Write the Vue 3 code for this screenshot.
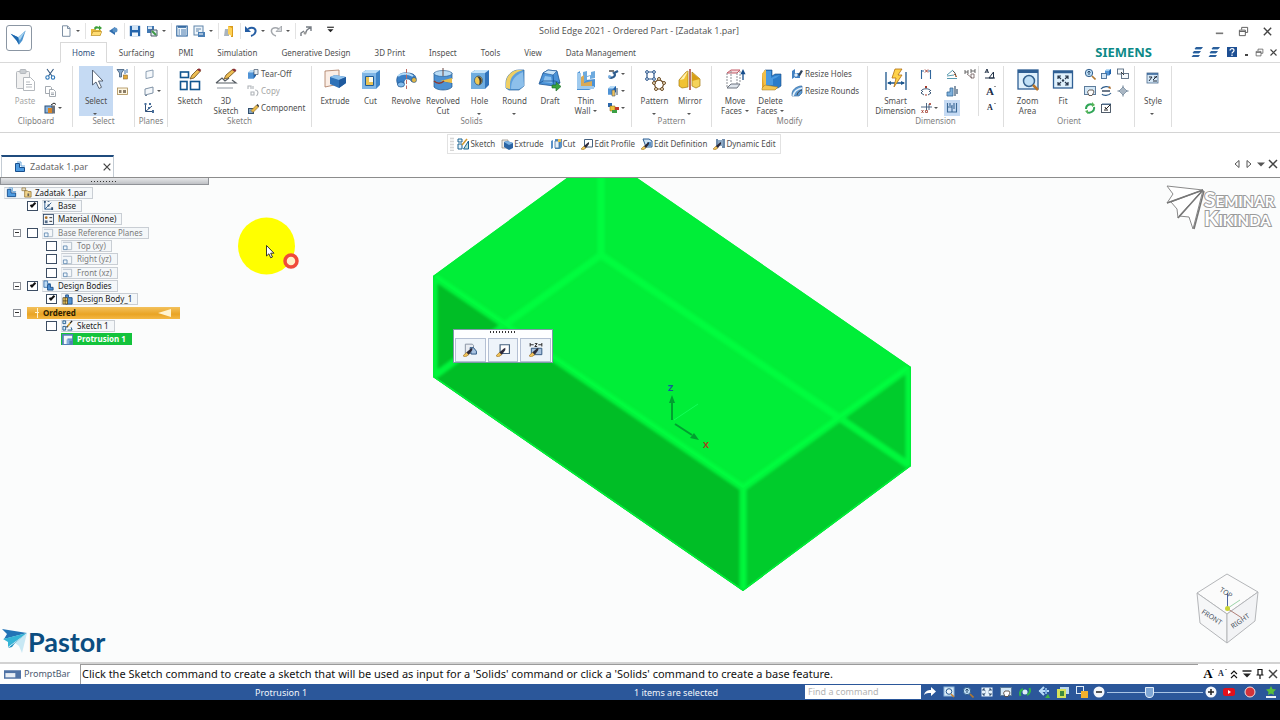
<script setup>
import { h, ref } from 'vue'

const pencil = '<path d="M4 8.500 9.500 3l2 2L6 10.500z" fill="#e9b949" stroke="#7a5a1c" stroke-width=".5"/><path d="M9.500 3 10.500 2l2 2-1 1z" fill="#333"/>'
const wand = '<path d="m0 11 3-3 2 2-3 2z" fill="#f0c258" stroke="#8a6420" stroke-width=".5"/><path d="m3 8 3.500-3L8 4v2L5 10z" fill="#2d2a3a"/>'
const box = (x, y, s) => `<g transform="translate(${x} ${y}) scale(${s})"><path d="M0 3 4 0h6v7L7 11H0z" fill="#4f93d6"/><path d="M0 3 3 0h7L7 3z" fill="#b9dcf6"/><path d="M7 3 10 0v7l-3 4z" fill="#1d5fa8"/></g>`

const big = {
  paste: '<g fill="#f1f1f1" stroke="#b4b8bd"><rect x="3.500" y="3.500" width="13" height="17" rx="1"/><rect x="7" y="1.500" width="6" height="4" rx="1" fill="#c9cdd1"/><path d="M10.500 9.500h7l4 4v9h-11z" fill="#fff"/><path d="M13 14h4M13 16.500h6M13 19h6"/></g>',
  select: '<path d="M8.500 2v15l3.500-3 3 6.500 2.500-1.200-3-6.300h4.500z" fill="#fff" stroke="#4a5668" stroke-width=".9"/>',
  sketch: '<g fill="none" stroke="#12568f" stroke-width="1.600"><rect x="2.500" y="4" width="8" height="5.500"/><rect x="2.500" y="13.500" width="6.500" height="8"/><rect x="12.500" y="13.500" width="9" height="8"/></g><path d="m12 11 2-4 6-6 2.500 2L16 10z" fill="#edbd52" stroke="#6b4a17" stroke-width=".8"/><path d="m19 2 2-1.800 2.300 1.800-1.500 1.500z" fill="#8c2d35"/>',
  sketch3d: '<g fill="none" stroke="#555c63" stroke-width="1.200"><path d="M2 15h20l-4-3M2 15l6-5 3 3 4-3"/><path d="M3 20h16" stroke="#b5bac0" stroke-width="1.500"/></g><path d="m10 11 2-4 7-6 2.500 2L14 10z" fill="#edbd52" stroke="#6b4a17" stroke-width=".8"/><path d="m18 2 2-1.500 2.500 1.500-1.500 2z" fill="#8c2d35"/>',
  extrude: '<path d="M2 3 16 2v14L2 19z" fill="#fbeee6" stroke="#a8765c" stroke-width=".8"/><path d="M7 9 12 7l11 2v6l-7 5-9-4z" fill="#2f72b8"/><path d="m7 9 5-2 11 2-7 3z" fill="#8fc1ec"/><path d="m16 12 7-3v6l-7 5z" fill="#1f5a9e"/>',
  cut: '<path d="M3 5 7 2h14v15l-4 4H3z" fill="#3f86c9"/><path d="M3 5h14v16H3z" fill="#7fb6e6"/><path d="M3 5 7 2h14l-4 3z" fill="#bfe0f8"/><path d="M6.500 8.500h8v9h-8z" fill="#fffbe8" stroke="#1b5a98"/><path d="M7 17V9h3v5h4v3z" fill="#e8c254"/>',
  revolve: '<path d="M4 17c-4-8 2-13 9-12 7 0 9 3 9 6l-4 3c-2-4-9-5-8 2z" fill="#3b80c6" stroke="#174f8c" stroke-width=".7"/><path d="M4 8c3-3 10-3 15 0" stroke="#b4dbf8" stroke-width="2" fill="none"/><ellipse cx="7" cy="16.500" rx="3.500" ry="2.500" fill="#86bceb" stroke="#174f8c" stroke-width=".7"/><circle cx="20" cy="12" r="2.500" fill="#e5b744" stroke="#174f8c" stroke-width=".6"/><path d="M12.500 1v20" stroke="#c0685f" stroke-dasharray="4 1.500"/>',
  revcut: '<path d="M3 5v14c3 4 15 4 18 0v-4l-9-2 9-2V5z" fill="#4d91d2" stroke="#1b568f" stroke-width=".7"/><path d="m9 13 12-3v5z" fill="#e9bf4b"/><ellipse cx="12" cy="5.500" rx="9" ry="3" fill="#b8dbf5" stroke="#1b568f" stroke-width=".6"/><path d="M3 13c3 3 7 3 10 0" fill="none" stroke="#8d3b30" stroke-width="1.500"/><path d="M12 0v8" stroke="#6b4640"/>',
  hole: '<path d="M3 5 7 2h14v15l-4 4H3z" fill="#3274bb"/><path d="M3 5h14v16H3z" fill="#70addf"/><path d="M3 5 7 2h14l-4 3z" fill="#c5e3f9"/><ellipse cx="10.500" cy="12.500" rx="4" ry="4.500" fill="#f0c852" stroke="#174b83" stroke-width=".7"/><path d="M9 8.500c6-1 6 7 2 8.500 1-3 1-6-2-8.500z" fill="#3e3930"/>',
  round: '<path d="M3 20V15C3 8 9 2 16 2h5v16l-5 4H6z" fill="#5d9fdb" stroke="#24609b" stroke-width=".7"/><path d="M3 20V15C3 8 9 2 16 2h4C12 4 7 9 7 16v5z" fill="#efcf64"/><path d="M8 21c0-8 3-13 12-17l1 14-5 3z" fill="#8dc0eb"/>',
  draft: '<path d="m5 5 5-3 9 1 3 12-6 3-15-2z" fill="#4b93d8" stroke="#1a5697" stroke-width=".8"/><path d="m5 5 5-3 9 1-4 4z" fill="#c8e4f9" stroke="#1a5697" stroke-width=".6"/><path d="m7 8 6 1 1 6-9-1z" fill="#8cc1ee"/><path d="m15 7 1 11M2 15l3-2h12l5 2" stroke="#1a5697" stroke-width=".8" fill="none"/><path d="M14 17h4v-3l5 4.500-5 4.500v-3h-4z" fill="#3aa43d" stroke="#1a6622" stroke-width=".6"/>',
  thin: '<path d="M3 5 6 3v13l6-4 9-1v8l-6 3H3z" fill="#4c92d5"/><path d="M3 5h4v13h13v3H3z" fill="#9fcaee"/><path d="M9 4v11l4-3V9l3-1v3l5-1V3l-4 1v3l-4 1V3z" fill="#6daade"/><path d="M7 18V9l3-2v8l8-2v5z" fill="#d9aa58"/>',
  pattern: '<path d="M4 4h7v7H4z" fill="none" stroke="#31598c" stroke-width="1.200"/><g fill="#dcebfa" stroke="#31598c"><circle cx="4" cy="4" r="1.400"/><circle cx="11" cy="4" r="1.400"/><circle cx="4" cy="11" r="1.400"/><circle cx="11" cy="11" r="1.400"/></g><path d="m16 11 5 4-2 6h-6l-2-6z" fill="none" stroke="#6b4c27" stroke-width="1.200"/><g fill="#f6e6c5" stroke="#6b4c27"><circle cx="16" cy="11" r="1.500"/><circle cx="21" cy="15" r="1.500"/><circle cx="19" cy="21" r="1.500"/><circle cx="13" cy="21" r="1.500"/><circle cx="11" cy="15" r="1.500"/></g>',
  mirror: '<path d="m1 12 7-8 2-1v16l-6 1-3-2z" fill="#f1c232" stroke="#a5790e" stroke-width=".7"/><path d="m2 12 4-1 4-8-4 4z" fill="#fff1b0"/><path d="m14 4 8 7v7l-4 2-4-2z" fill="#f5d35a" stroke="#a5790e" stroke-width=".7"/><path d="M14 5v8l8-2z" fill="#d79f17"/><path d="M12 1v21" stroke="#a23428" stroke-width="1.400"/>',
  movef: '<g fill="none"><path d="M4 5 8 2h9l-3 3z" fill="#f6d9dc" stroke="#c25a66"/><path d="M4 5v14M14 5v14M17 3v12M8 3v12" stroke="#8b8f95" stroke-dasharray="2 1"/><path d="m4 20 4-4h9l-3 4z" fill="#dfe5ec" stroke="#6e7580"/></g><path d="M20 12V3M18.500 5.500 20 2.500l1.500 3z" stroke="#164d8c" stroke-width="1.300" fill="#164d8c"/>',
  delf: '<path d="M3 6 6 2v16l13 1-3 3L3 20z" fill="#e6a426"/><path d="M6 2h7v6l3-2h6v12l-3 2H6z" fill="#2c7cc9" stroke="#174b83" stroke-width=".6"/><path d="M3 6 6 2h1v16H5z" fill="#f3c04a"/><path d="M7 3h5v7l4-2 5-1-4 3-3 1v6H7z" fill="#4b9ae0"/><path d="M3 20 6 17l13 2-3 3H3z" fill="#f5c651" stroke="#a3741c" stroke-width=".5"/>',
  smart: '<g stroke="#1c568d" stroke-width="1.300" fill="#1c568d"><path d="M2 4v18M22 4v18M4 15h16"/><path d="m3 15 4-2v4zM21 15l-4-2v4z" stroke="none"/></g><path d="m11 1-3 9h4l-2 9 8-12h-4l4-6z" fill="#ffd24a" stroke="#b06e13" stroke-width=".8"/>',
  zoomarea: '<rect x="2" y="2" width="20" height="19" fill="#dff0fc" stroke="#2f5f94" stroke-width="1.300"/><path d="M2 3.500h20" stroke="#2f5f94" stroke-width="3"/><circle cx="13" cy="13" r="5.500" fill="#bfdff6" stroke="#35628f" stroke-width="1.500"/><path d="m17 17 5 5" stroke="#b97428" stroke-width="2.500"/>',
  fit: '<rect x="2.500" y="3" width="19" height="17" fill="#dff0fc" stroke="#2f5f94" stroke-width="1.300"/><path d="M2 4h20" stroke="#2f5f94" stroke-width="2.500"/><g stroke="#27374c" stroke-width="1.200" fill="none"><path d="M7 11V8h3M7 8l3 3M17 11V8h-3M17 8l-3 3M7 14v3h3M7 17l3-3M17 14v3h-3M17 17l-3-3"/></g><circle cx="12" cy="12.500" r="1.200" fill="#27374c"/>',
  style: '<g transform="translate(5 4)"><rect x="1" y="1" width="11" height="10" fill="#d6e8f7" stroke="#4d6c8e" stroke-width=".8"/><path d="M1 2h11" stroke="#2f5f94" stroke-width="1.500"/><path d="M3 5h3L3 9M7 8l4-4M8 5h3M7 9h4" stroke="#222b38" fill="none"/></g>',
}

const small = {
  scissors: '<path d="m3 1 5 7M9.500 1l-5 7" stroke="#35587f" stroke-width="1.100"/><circle cx="3.500" cy="9.500" r="1.700" fill="none" stroke="#2a76b9" stroke-width="1.100"/><circle cx="9" cy="9.500" r="1.700" fill="none" stroke="#2a76b9" stroke-width="1.100"/>',
  copy: '<g fill="#fff" stroke="#9aa0a8" stroke-width=".9"><path d="M1.500 1.500h5l1 1v6h-6z"/><path d="M5.500 4.500h4l2 2v5h-6z"/><path d="M7 8h3M7 9.500h3"/></g>',
  format: '<rect x="1" y="4" width="7" height="7" fill="#8ab4dc" stroke="#264f7d"/><path d="M4 6h4v5H4z" fill="#d78528"/><path d="M8 3.500h3v8H8z" fill="#6c7179"/><path d="m7 3 3-2 2 1.500" stroke="#222" fill="none"/>',
  filter: '<path d="M1 1.500h7L5.500 5v4h-2V5z" fill="#88a9cc" stroke="#3e5a7a" stroke-width=".8"/><path d="M9 2v4M11 1v4" stroke="#3a6ea8"/><rect x="7.500" y="7" width="4" height="4" fill="#e3aa3b" stroke="#7c5618" stroke-width=".5"/>',
  overlap: '<rect x="1.500" y="3" width="10" height="6.500" fill="#fff7e2" stroke="#a88b53" stroke-width=".8"/><path d="M3 5h2.500v3H3zM7 5h3v3H7z" fill="#8b7d68"/>',
  plane: '<path d="M3 3.500 10 2v7l-7 1.500z" fill="#f5f8fb" stroke="#8296ab" stroke-width=".9"/>',
  plane2: '<path d="m2 4 8-2v6l-8 2z" fill="#f5f8fb" stroke="#73879c" stroke-width=".9"/><path d="M2 10.500h2" stroke="#73879c"/>',
  csys: '<g stroke="#2e4f78" fill="none"><path d="M2.500 2v7.500M2.500 9.500H10M2.500 9.500 9 4"/></g><g fill="#466d9a"><path d="M1.500 1h2v2h-2zM6 1h2v2H6zM9 8h2v3H9zM5 5h2v2H5z"/></g>',
  tear: box(1, 2, 0.8) + '<path d="M7 1.500h4v5H7z" fill="#e8eef4" stroke="#596a7d" stroke-width=".8"/>',
  scopy: '<g fill="none" stroke="#aeb2b7" stroke-width="1.100"><path d="M1 4V1h3v3M6 4V1M8 5c3 0 4 3 1.500 6M4 7h3v3H4z"/></g>',
  comp: '<rect x="1.500" y="6.500" width="5" height="5" fill="#87a5c2" stroke="#32506f"/>' + pencil,
  sweep: '<path d="M2 9c3 2 8-1 5-4l4-2" fill="none" stroke="#2f5d8e" stroke-width="2.300"/><path d="M2 3h5" stroke="#222" stroke-width="1.200"/><circle cx="2.500" cy="8.500" r="1.500" fill="#79b0e3"/>',
  lip: box(1, 1, 0.8) + '<path d="M5 5h3v6H5z" fill="#f0c25a" stroke="#4b5b6c" stroke-width=".6"/><path d="M9 3h2v7H9z" fill="#9aa5b0"/>',
  bool: '<path d="M1 1h4v4H1z" fill="#2c68ad"/><path d="M3 4h5v5H3z" fill="#efc23c" stroke="#7a5a10" stroke-width=".5"/><path d="M8 5h4v3H8z" fill="#c0392b"/><path d="M5 8h5v3H5z" fill="#3ca044"/>',
  rholes: '<path d="M1 3 4 1v8l-3 2zM4 5h5v5H4z" fill="#4281c2"/><path d="m7 7 3-5 2 1-3 5z" fill="#31445c"/><circle cx="5" cy="7" r="1.700" fill="#e3eef8"/>',
  rrounds: '<path d="M1 11V8c1-4 4-6 8-7h2v7l-3 3z" fill="#5e9bd3" stroke="#2a5f96" stroke-width=".6"/><path d="M2 11c1-5 4-7 9-8" stroke="#e6f2fb" stroke-width="1.500" fill="none"/><path d="M6 10c1-3 2-4 5-5" stroke="#3d444e" fill="none"/>',
  dist: '<path d="M1.500 2v9M10.500 2v9M2 3h2M8 3h2" stroke="#30669c" stroke-width="1.100"/><path d="m5 1.500 3 3M8 1.500l-3 3" stroke="#a23a2c"/>',
  angle: '<path d="M1 6c2-3 8-3 10 0M3 6 1 8l3 2M9 6l2 2-3 2" stroke="#3b5878" fill="none"/><path d="m5 1 2 2M7 1 5 3M5 10h2" stroke="#a23a2c" fill="none"/>',
  coord: '<path d="M1 5h11M6.500 1v7M9 2v6" stroke="#3b5878" stroke-width=".9"/><path d="m1.500 8 2 3M3.500 8l-2 3M5.500 8.500h2v2h-2zM9 1l2 2M11 1 9 3" stroke="#a23a2c" stroke-width=".8" fill="none"/>',
  angular: '<path d="m1 7 6-5M1 10.500h10M1 8l7-1" stroke="#5a9bb0"/><path d="M7 3c2 1 3 4 3 6" stroke="#444" fill="none"/><path d="m8 6 3 3" stroke="#c56a30"/>',
  sym: '<path d="M1 11V7h3V3h3v8z" fill="#7db0dc" stroke="#376997" stroke-width=".8"/><path d="M9 1v10M11 4v5" stroke="#38536f" stroke-width="1.200"/>',
  attach: '<path d="M1.500 1v9h9V1M6 3v7M1.500 5H6M4 1v3M8 1v6" stroke="#3a6895" fill="none" stroke-width="1.100"/>',
  styled: '<path d="M1 2v4M1 4h3M4 2v4M7 1v4M7 3h4M11 1v4" stroke="#555" stroke-width=".9"/><path d="m3 6 5 4M7 6h3v4H7z" stroke="#7a6a6a" stroke-width=".9" fill="none"/>',
  atext: '<path d="m1 5 2-4 1.500 4M2 4h2M5 10l4.500-6v6zM1 10h10" stroke="#1f2f45" fill="none"/>',
  zoom: '<circle cx="5" cy="5" r="3.700" fill="#bcdcf4" stroke="#35628f"/><path d="m8 8 3.500 3.500" stroke="#b27930" stroke-width="1.600"/><path d="M5 3v4M3.500 4.500 5 3l1.500 1.500" stroke="#2b4c6e" fill="none"/>',
  rotate: box(5, 1, 0.6) + '<rect x="1.500" y="5.500" width="5" height="5" fill="#d2e6f7" stroke="#436b95" stroke-width=".9"/>',
  views: '<g fill="#f5f9fc" stroke="#55697e" stroke-width=".9"><rect x=".5" y="1" width="6" height="5"/><rect x="4.500" y="5.500" width="7" height="5"/></g><path d="m4 4 3 3" stroke="#333"/>',
  pan: '<rect x=".5" y="1.500" width="11" height="8" fill="#d3e7f6" stroke="#5d7c9b"/><path d="M5 10.500 3.500 7 5 5h4l1 2-2 3.500z" fill="#fff" stroke="#4b3d33" stroke-width=".8"/>',
  spin: '<path d="M1 4c2-3 8-3 9-1M11 8c-2 3-8 3-9 1" stroke="#2f5d8b" stroke-width="1.200" fill="none"/><path d="M2 5h8v2H2z" fill="#6c7888"/><path d="m10 1 1 3-3-1z" fill="#b06a21"/>',
  shade: '<path d="m6 2 4 4-4 4-4-4z" fill="#a9b6c3" stroke="#7c8fa2" stroke-width=".8"/><path d="M6 .5v2M6 9.500v2M.5 6h2M9.500 6h2" stroke="#60788e"/>',
  refresh: '<path d="M2 7c0-4 4-6 7-4M10 5c1 4-4 7-7 5" stroke="#2fa556" stroke-width="2" fill="none"/><path d="m8 0 3 3-3 2zM4 12 1 9l3-1z" fill="#58b558"/>',
  editv: '<rect x="1.500" y="2.500" width="9" height="8" fill="#fff" stroke="#3f4d5c" stroke-width=".9"/><path d="m5 5 1 2 5-5M4 8h4" stroke="#222" fill="none"/><path d="M2 2h9" stroke="#4b7197"/>',
  file: '<path d="M2.500.8h5l2.500 2.500v8H2.500z" fill="#fdfefe" stroke="#7d8fa3"/><path d="M7.500 1v2.500H10" fill="none" stroke="#7d8fa3"/>',
  open: '<path d="M1 10.500V4h4l1 1h5v5.500z" fill="#e8b73a"/><path d="m1 10.500 2-4h9l-2 4z" fill="#ffdc73" stroke="#a57a1b" stroke-width=".5"/><path d="M4 3c1-2 3-2 5-1V.5L12 3 9 5.500V4C7 3 6 4 5 5z" fill="#3fa13c"/>',
  prev: '<path d="m2 6 6-4v8z" fill="#2f6cae"/><circle cx="8" cy="5" r="2.500" fill="#5a92c6"/>',
  save: '<path d="M.8.800h10.400v10.400H.8z" fill="#2465ac"/><path d="M3 1h6v4H3z" fill="#cfe3f5"/><path d="M3 7.500h6V11H3z" fill="#eef5fb"/>',
  saveall: '<path d="M1 1h7v7H1z" fill="#4279b3"/><path d="M2 1.500h4v2.500H2z" fill="#dceaf6"/><path d="M5 5h6v6H5z" fill="#e5edf4" stroke="#4c5a6a"/><path d="m6 6 4 4" stroke="#3d9a45" stroke-width="2"/>',
  list: '<rect x=".8" y="1" width="10.400" height="10" fill="#eff7fd" stroke="#1d5795"/><path d="M2 2h8" stroke="#1d5795" stroke-width="1.500"/><path d="M2.500 5h1.500M5 5h5M2.500 7h1.500M5 7h5M2.500 9h1.500M5 9h5" stroke="#1d5795" stroke-width=".8"/>',
  form: '<rect x="1" y="1" width="9" height="9" fill="#eef5fb" stroke="#6085aa"/><path d="M3 4h5M3 6h3" stroke="#6085aa"/><path d="M5 7h7v5H5z" fill="#4a7fb5"/><path d="M6 9h4" stroke="#fff"/>',
  door: '<path d="M2 4h4v7H1z" fill="#aab4be"/><path d="M5 1h5v11H8V5H5z" fill="#d99b1d"/><path d="m5 1 4 2v8l-4-2z" fill="#ffd052"/>',
  undo: '<path d="M3 4c5-3 9 0 7 4-.6 1.500-2 2.500-4 3" fill="none" stroke="#245da3" stroke-width="2"/><path d="M0 1v6h6z" fill="#245da3"/>',
  redo: '<path d="M9 4C4 1 0 4 2 8c.6 1.500 2 2.500 4 3" fill="none" stroke="#a3a7ac" stroke-width="1.500"/><path d="M11.500 1v5.500H6z" fill="#d5d8db" stroke="#9a9ea3" stroke-width=".8"/>',
  cmd: '<path d="M1 11V8l3-2M5 9l2-4 4-3M6 2h5v4" fill="none" stroke="#777d84" stroke-width="1.400"/><circle cx="5" cy="8" r="1.500" fill="#999"/>',
  b1: '<path d="M1 1h4v3H1zM1 6h4v5H1z" fill="#e5f2fa" stroke="#1a6390"/><path d="M6.500 11h5V3z" fill="#bfe0d8" stroke="#1a6390"/><path d="m5 7 5-6" stroke="#d29a31" stroke-width="1.500"/>',
  b2: '<path d="M1 2h6v8H1z" fill="#f3f0ea" stroke="#776c60" stroke-width=".6"/><path d="m3 4 3-1 6 2v5l-4 2-5-3z" fill="#2c65a4"/><path d="m3 4 3-1 6 2-4 2z" fill="#7db2e2"/>',
  b3: '<path d="M1 3l2-1v8l-2 1zM5 1h7v8l-2 2H5z" fill="#5992c8"/><path d="M5 3h4v7H5z" fill="#e3f0fa" stroke="#2b5f93" stroke-width=".7"/><path d="M8 1h3v3H8z" fill="#ebc053"/>',
  b4: '<path d="M3.500 1.500h8v7.500h-8z" fill="#fff" stroke="#44607e"/>' + wand,
  b5: '<path d="M2 1h6l3 2v6H5z" fill="#cfe2f4" stroke="#2d5e92"/><path d="M6 4h4v4H6z" fill="#5e93c8"/>' + wand,
  b6: '<path d="M3 1h2v8H3zM9 1h3v9H9z" fill="#6e8bab"/><path d="M5 2h5v6H5z" fill="#8ea9c4"/>' + wand,
  part: '<path d="M1.500 2.500h4v4h5v4h-9z" fill="#4e9be0" stroke="#184f8d"/><path d="M3 1h4v4h4" fill="none" stroke="#6ba8dc"/>',
  lock: '<path d="M1 1h4v3H1z" fill="#e9e2cc" stroke="#8a6a28" stroke-width=".7"/><path d="M4 4h3l1 1h3v6H4z" fill="#f1d58c" stroke="#8a6a28" stroke-width=".8"/><path d="M7 7h2v3H7z" fill="#69645a"/>',
  base: '<path d="M2 1v9h8M2 10l7-7" stroke="#2c5c8e" fill="none"/><g fill="#2c4d70"><path d="M1 1h2v2H1zM5 1h2v1H5zM9 8h2v3H9zM5 5h2v2H5z"/></g>',
  mat: '<rect x=".5" y=".5" width="11" height="11" fill="#f2f6fa" stroke="#2e4766" stroke-width=".9"/><path d="M7 4h3M7 8h3" stroke="#222"/><circle cx="3.500" cy="4" r="1.500" fill="#a96e25"/><path d="M2 7h3v3H2z" fill="#526a86"/>',
  refp: '<path d="M1 2.500h9.500v8H5.500" fill="none" stroke="#a9b6c4" stroke-width=".9"/><path d="M1.500 6.500h4v4h-4z" fill="#eef5fb" stroke="#5a84ae" stroke-width=".9"/>',
  bodies: '<path d="M1 1h4v3h3v4H1z" fill="#bedaf3" stroke="#3d74ae"/><path d="M5 5h3v3h3v3H5z" fill="#4f90d3" stroke="#1d4f88"/>',
  body: '<path d="M4 1h3v3h4v7H4z" fill="#5493d2" stroke="#1d4f88"/><path d="M1 4h5v7H1z" fill="#f3cc62" stroke="#473a1e" stroke-width=".8"/><path d="M3.500 4v7M1 7.500h5" stroke="#473a1e" stroke-width=".8"/>',
  sk: '<path d="M1 1h3v3H1zM1 7h3v4H1z" fill="#ddecf8" stroke="#1c5b8f"/><path d="M6 11h5l-1-3" fill="none" stroke="#1c5b8f"/><path d="m5 8 6-7" stroke="#1a1a1a" stroke-width="1.500"/><path d="m6 7 3-4" stroke="#e3af3b" stroke-width="1.500"/>',
  prot: '<path d="M0 0h12v12H0z" fill="#5380b5"/><path d="M2 11V2h9v3H6v6z" fill="#f3f7fb"/><path d="M5 6h6v1H8v4H5z" fill="#88afdb"/>',
  f1: '<path d="M2 1h6l1 1v7H2z" fill="#e8ecf2" stroke="#8490a0" stroke-width=".8"/><path d="M6 4h3l2.500 3v2.500H7z" fill="#a8c3e2" stroke="#26517f" stroke-width=".8"/>' + wand,
  f3: '<path d="M1 0v3M11 0v3M1 1.500h3M8 1.500h3M5 .5h2L5 3h2" stroke="#222" stroke-width=".8" fill="none"/><path d="M2 4.500h9V10H2z" fill="#a9c1de" stroke="#2f567f" stroke-width=".8"/>' + wand,
  share: '<path d="M0 9c1-4 4-5 7-5V1l5 4.500L7 10V7C4 7 2 7 0 9z" fill="#fff"/>',
  szoom: '<rect x="1" y="1" width="10" height="9" fill="#d8ebf8" stroke="#8fb7da"/><circle cx="6" cy="5.500" r="2.800" fill="#eef7fd" stroke="#285a8f"/><path d="m8 8 3 3" stroke="#c9832f" stroke-width="1.500"/>',
  sfit: '<rect x=".5" y="1.500" width="11" height="9" fill="#e6f2fb"/><path d="M2 3h2M2 3v2M2 3l2.500 2M10 3H8M10 3v2M10 3 7.500 5M2 9h2M2 9V7M2 9l2.500-2M10 9H8M10 9V7M10 9 7.500 7" stroke="#28456a" stroke-width=".9" fill="none"/>',
  srot: '<path d="M1.500 10C0 6 2 4 4 3M10.500 2C12 6 10 8 8 9" fill="none" stroke="#32b34a" stroke-width="2"/><circle cx="6" cy="6" r="2.500" fill="#dbeefa"/>',
  sarr: '<path d="M1 5h10M6 1 2 5l4 4" stroke="#b9dcf8" stroke-width="2" fill="none"/><path d="M8 2v6" stroke="#7fb0e0" stroke-width="2"/><path d="m7 12 3-4 2 4z" fill="#41b047"/>',
  sview: '<path d="M3 1h9v7H3z" fill="#bcd8ef"/><path d="M0 3h9v9H0z" fill="#d6e25a"/><path d="M3 5h4v5H3z" fill="#3e8a3d"/>',
  swin: '<rect x=".5" y=".5" width="7" height="7" fill="#2b579a" stroke="#e2edf8"/><rect x="5" y="5" width="7" height="7" fill="#f3b12d"/>',
  tube: '<rect x="0" y="2" width="12" height="8" rx="2.500" fill="#e3101b"/><path d="m5 4 3 2-3 2z" fill="#fff"/>',
  rec: '<circle cx="6" cy="6" r="5" fill="#d3333a" stroke="#f3dede"/>',
  star: '<path d="m6 0 1.500 3 3.500.5L8.500 6l.5 3-3-1.500L3 9l.5-3L1 3.500 4.500 3z" fill="#58bd3c"/><path d="M1 10h10v2H1z" fill="#eef2f7"/>',
  strip: '<path d="M5 1h7l-1.500 2h-7zM3 5h7L8.500 7h-7zM2 9h7l-1.500 2h-7z" fill="#2b5f9b"/><path d="M4 3.500h6M2 7.500h6" stroke="#9cc1e2"/>',
  help: '<rect x="1" y="1" width="10" height="10" fill="#1d4f93"/><path d="M4 4.500C4 2 8 2 8 4.500 8 6 6 6 6 7.500M6 8.500V10" stroke="#fff" stroke-width="1.200" fill="none"/>',
  min: '<path d="M2 8h8" stroke="#777" stroke-width="1.800"/>',
  restore: '<path d="M4 4V1.500h6.500V7H8M1.500 4.500H8v6H1.500zM1.500 6H8" stroke="#555" fill="none"/>',
  close: '<path d="m2 2 8 8M10 2l-8 8" stroke="#444" stroke-width="1.500"/>',
  left: '<path d="m8 2.500-4 3.500 4 3.500z" fill="none" stroke="#555"/>',
  right: '<path d="m4 2.500 4 3.500-4 3.500z" fill="none" stroke="#555"/>',
  down: '<path d="M2 4.500h8L6 8.500z" fill="#555"/>',
  up2: '<path d="m3 6 3-3 3 3M3 10l3-3 3 3" stroke="#111" stroke-width="1.100" fill="none"/>',
  down2: '<path d="M1.500 3h9" stroke="#222" stroke-width="1.500"/><path d="M2 5.500h8L6 9.500z" fill="#222"/>',
  pin: '<path d="M4 1.500h4V7H4zM2.500 7h7M6 7v4" stroke="#111" fill="none" stroke-width="1.200"/>',
  keys: '<rect x="0" y="3" width="12" height="6" fill="#4f72a5"/><path d="M1 5h7v3H1z" fill="#e8eef6"/>',
}

const Icon = (p) =>
  h('svg', {
    class: big[p.n] ? 'icon icon-lg' : 'icon',
    viewBox: big[p.n] ? '0 0 24 24' : '0 0 12 12',
    innerHTML: big[p.n] || small[p.n],
    'aria-hidden': 'true',
  })
Icon.props = ['n']

const quick = [
  [{ n: 'file', dd: 1 }],
  [{ n: 'open' }, { n: 'prev' }],
  [{ n: 'save' }, { n: 'saveall', dd: 1 }],
  [{ n: 'list' }, { n: 'form', dd: 1 }],
  [{ n: 'door' }],
  [{ n: 'undo', dd: 1 }, { n: 'redo', dd: 1 }],
  [{ n: 'cmd' }],
]

const tabs = ['Home', 'Surfacing', 'PMI', 'Simulation', 'Generative Design', '3D Print', 'Inspect', 'Tools', 'View', 'Data Management']

const b = (n, lines, o = {}) => ({ n, lines, ...o })
const s = (...items) => ({ items })
const groups = [
  { name: 'Clipboard', cls: 'g-clip', cols: [b('paste', ['Paste'], { off: 1 }), s({ n: 'scissors' }, { n: 'copy' }, { n: 'format', dd: 1 })] },
  { name: 'Select', cls: 'g-select', cols: [b('select', ['Select'], { dd: 1, on: 1 }), s({ n: 'filter' }, { n: 'overlap' })] },
  { name: 'Planes', cls: 'g-planes', cols: [s({ n: 'plane' }, { n: 'plane2', dd: 1 }, { n: 'csys' })] },
  { name: 'Sketch', cls: 'g-sketch', cols: [b('sketch', ['Sketch']), b('sketch3d', ['3D', 'Sketch']), s({ n: 'tear', t: 'Tear-Off' }, { n: 'scopy', t: 'Copy', off: 1 }, { n: 'comp', t: 'Component' })] },
  {
    name: 'Solids', cls: 'g-solids', cols: [
      b('extrude', ['Extrude']), b('cut', ['Cut']), b('revolve', ['Revolve']), b('revcut', ['Revolved', 'Cut']),
      b('hole', ['Hole'], { dd: 1 }), b('round', ['Round'], { dd: 1 }), b('draft', ['Draft']), b('thin', ['Thin', 'Wall'], { dd: 1 }),
      s({ n: 'sweep', dd: 1 }, { n: 'lip', dd: 1 }, { n: 'bool', dd: 1 }),
    ],
  },
  { name: 'Pattern', cls: 'g-pattern', cols: [b('pattern', ['Pattern'], { dd: 1 }), b('mirror', ['Mirror'], { dd: 1 })] },
  { name: 'Modify', cls: 'g-modify', cols: [b('movef', ['Move', 'Faces'], { dd: 1 }), b('delf', ['Delete', 'Faces'], { dd: 1 }), s({ n: 'rholes', t: 'Resize Holes' }, { n: 'rrounds', t: 'Resize Rounds' })] },
  {
    name: 'Dimension', cls: 'g-dim', cols: [
      b('smart', ['Smart', 'Dimension']), s({ n: 'dist' }, { n: 'angle' }, { n: 'coord', dd: 1 }),
      s({ n: 'angular' }, { n: 'sym' }, { n: 'attach', on: 1 }), s({ n: 'styled' }),
      { ...s({ n: 'atext' }, { a: 'lg' }, { a: 'sm' }), bar: 1 },
    ],
  },
  {
    name: 'Orient', cls: 'g-orient', cols: [
      b('zoomarea', ['Zoom', 'Area']), b('fit', ['Fit']), s({ n: 'zoom' }, { n: 'pan' }, { n: 'refresh' }),
      s({ n: 'rotate' }, { n: 'spin' }, { n: 'editv' }), s({ n: 'views' }, { n: 'shade' }),
    ],
  },
  { name: '', cls: 'g-style', cols: [b('style', ['Style'], { dd: 1 })] },
]

const commands = [
  ['b1', 'Sketch'], ['b2', 'Extrude'], ['b3', 'Cut'], ['b4', 'Edit Profile'], ['b5', 'Edit Definition'], ['b6', 'Dynamic Edit'],
]

const tree = ref([
  { t: 'Base', n: 'base', lv: 1, ck: true },
  { t: 'Material (None)', n: 'mat', lv: 1 },
  { t: 'Base Reference Planes', n: 'refp', lv: 1, ck: false, ex: 1, dim: 1 },
  { t: 'Top (xy)', n: 'refp', lv: 2, ck: false, dim: 1 },
  { t: 'Right (yz)', n: 'refp', lv: 2, ck: false, dim: 1 },
  { t: 'Front (xz)', n: 'refp', lv: 2, ck: false, dim: 1 },
  { t: 'Design Bodies', n: 'bodies', lv: 1, ck: true, ex: 1 },
  { t: 'Design Body_1', n: 'body', lv: 2, ck: true },
  { t: 'Ordered', lv: 1, ex: 1, bar: 1 },
  { t: 'Sketch 1', n: 'sk', lv: 2, ck: false },
  { t: 'Protrusion 1', n: 'prot', lv: 2, hot: 1 },
])

const edges = 'M433 276 743 488 910 367M743 488V590M601 255V140M601 255 433 377M601 255 910 466M434 276V377M909 367V466'
const outline = 'M433 276 601 153 911 367V466L743 591 433 377Z'
const statusIcons = ['share', 'szoom', 'zoom', 'sfit', 'pan', 'srot', 'sarr', 'sview', 'swin']
const query = ref('')
const zoomLevel = ref(44)
</script>

<template>
  <div class="screen">
    <header class="titlebar">
      <button class="app-btn" aria-label="Application menu">
        <svg viewBox="0 0 24 24"><path d="m2 7 9 4 9-8-4 12-4 5-3-5z" fill="#4b93cf" /><path d="m2 7 9 4 1 9-3-5z" fill="#1e68ae" /><path d="m11 11 9-8-7 12z" fill="#a9d3ef" /></svg>
      </button>
      <div class="head">
        <div class="head-row">
          <div class="quick">
            <div v-for="(g, i) in quick" :key="i" class="quick-group">
              <button v-for="q in g" :key="q.n" :aria-label="q.n"><Icon :n="q.n" /><i v-if="q.dd" class="dd"></i></button>
            </div>
            <button class="custom" aria-label="Customize"><Icon n="down2" /></button>
          </div>
          <div class="title">Solid Edge 2021 - Ordered Part - [Zadatak 1.par]</div>
          <div class="win">
            <button aria-label="Minimize"><Icon n="min" /></button>
            <button aria-label="Restore"><Icon n="restore" /></button>
            <button aria-label="Close"><Icon n="close" /></button>
          </div>
        </div>
        <div class="head-row tabs-row">
          <nav class="tabs">
            <button v-for="(t, i) in tabs" :key="t" :class="{ active: i === 0 }">{{ t }}</button>
          </nav>
          <div class="brand">SIEMENS</div>
          <div class="mini">
            <button aria-label="Tile"><Icon n="strip" /></button>
            <button aria-label="Cascade"><Icon n="strip" /></button>
            <button aria-label="Help"><Icon n="help" /></button>
            <button aria-label="Minimize document" class="narrow"><span class="dot"></span></button>
            <button aria-label="Restore document" class="tiny"><Icon n="restore" /></button>
            <button aria-label="Close document" class="tiny"><Icon n="close" /></button>
          </div>
        </div>
      </div>
    </header>

    <section class="ribbon">
      <div v-for="g in groups" :key="g.cls" class="group">
        <div class="group-body" :class="g.cls">
          <template v-for="(c, i) in g.cols" :key="i">
            <button v-if="c.lines" class="big" :class="{ on: c.on, off: c.off }">
              <Icon :n="c.n" />
              <span class="cap">
                <span v-for="(l, k) in c.lines" :key="l">{{ l }}<i v-if="c.dd && k === 1" class="dd side"></i></span>
              </span>
              <i v-if="c.dd && c.lines.length === 1" class="dd under"></i>
            </button>
            <div v-else class="stack" :class="{ bar: c.bar }">
              <button v-for="(m, k) in c.items" :key="k" :class="{ on: m.on, off: m.off }" :aria-label="m.t || m.n || 'Text size'">
                <span v-if="m.a" class="letter" :class="m.a">A</span>
                <Icon v-else :n="m.n" />
                <span v-if="m.t">{{ m.t }}</span>
                <i v-if="m.dd" class="dd"></i>
              </button>
            </div>
          </template>
        </div>
        <div class="group-name">{{ g.name }}</div>
      </div>
    </section>

    <section class="command-row">
      <div class="commands">
        <span class="grip"></span>
        <button v-for="c in commands" :key="c[1]"><Icon :n="c[0]" />{{ c[1] }}</button>
      </div>
    </section>

    <section class="docs">
      <div class="doc-tab"><Icon n="part" /><span>Zadatak 1.par</span><button aria-label="Close tab"><Icon n="close" /></button></div>
      <div class="doc-nav">
        <button aria-label="Previous tab"><Icon n="left" /></button>
        <button aria-label="Next tab"><Icon n="right" /></button>
        <button aria-label="Tab list"><Icon n="down" /></button>
        <button aria-label="Close"><Icon n="close" /></button>
      </div>
    </section>

    <main class="canvas">
      <svg class="model" viewBox="0 178 1280 484" preserveAspectRatio="xMidYMin meet">
        <defs>
          <clipPath id="solid"><path :d="outline" /></clipPath>
          <filter id="soft" x="-5%" y="-5%" width="110%" height="110%"><feGaussianBlur stdDeviation="1.500" /></filter>
        </defs>
        <path :d="outline" fill="#00ee38" />
        <path d="M433 276 743 488V591L433 377Z" fill="#00be26" />
        <path d="M743 488 911 367V466L743 591Z" fill="#00cc2c" />
        <g clip-path="url(#solid)" fill="none" stroke="#00ff40">
          <path :d="edges" stroke-width="7" filter="url(#soft)" opacity=".85" />
          <path :d="outline" stroke="#00ee38" stroke-width="3" />
        </g>
        <g stroke="#00a030" fill="#00a030" stroke-width="2">
          <path d="M672 420V402" /><path d="m669 403 3-8 3 8z" stroke="none" />
          <path d="m675 424 17 11" /><path d="m699 440-9-2 4-5z" stroke="none" />
          <path d="m674 420 24-16" stroke="#10ff58" stroke-width="1" />
        </g>
        <text x="668" y="391" class="axis" fill="#175a9a">Z</text>
        <text x="703" y="448" class="axis" fill="#a8431c">X</text>
        <circle cx="266.500" cy="246" r="28.500" fill="#ffff00" />
        <circle cx="291" cy="261" r="6" fill="#fff0c8" stroke="#f04a3a" stroke-width="3.500" />
        <path d="M266.500 245.500v10.500l2.400-2.200 1.800 4 1.800-.8-1.800-3.800h3.300z" fill="#fff" stroke="#222" stroke-width=".9" />
      </svg>

      <aside class="panel">
        <div class="handle"><span></span></div>
        <div class="tree">
          <div class="node root"><span class="chip"><Icon n="part" /><Icon n="lock" />Zadatak 1.par</span></div>
          <div v-for="r in tree" :key="r.t" class="node" :class="['lv' + r.lv, { dim: r.dim }]">
            <button v-if="r.ex" class="expander" aria-label="Collapse"></button>
            <span v-if="r.bar" class="ordered"><i class="tick"></i>{{ r.t }}<i class="back"></i></span>
            <label v-else>
              <input v-if="r.ck !== undefined" v-model="r.ck" type="checkbox" />
              <span v-else class="nocheck"></span>
              <span class="chip" :class="{ hot: r.hot }"><Icon :n="r.n" />{{ r.t }}</span>
            </label>
          </div>
        </div>
      </aside>

      <div class="floatbar">
        <span class="dots"></span>
        <div>
          <button aria-label="Edit Definition"><Icon n="f1" /></button>
          <button aria-label="Edit Profile"><Icon n="b4" /></button>
          <button aria-label="Dynamic Edit"><Icon n="f3" /></button>
        </div>
      </div>

      <svg class="seminar" viewBox="0 0 112 48">
        <g fill="#fff" stroke="#8a8a8a" stroke-width="1" stroke-linejoin="round">
          <path d="M2 3 38 7 2 20l6-9z" /><path d="M38 7 13 35l-1-9-6-7z" /><path d="m38 7-10 39-4-12-10-1z" />
        </g>
        <g fill="none" stroke="#777" stroke-width="1.500"><path d="M38 7 2 20M38 7 13 35M39 8 29 46" /></g>
        <g class="sem-text"><text x="39" y="24"><tspan class="cap1">S</tspan>EMINAR</text><text x="39" y="43"><tspan class="cap1">K</tspan>IKINDA</text></g>
      </svg>

      <div class="pastor">
        <svg viewBox="0 0 28 28"><path d="M2 1 27 5 4 11l3-5z" fill="#2273b6" /><path d="M27 5 8 19v-5l-5-3z" fill="#35b4d6" /><path d="M27 5 22 25l-3-7-4-3z" fill="#c8e8f4" /><path d="M27 5 8 20l4-1 3-4z" fill="#1b90c0" /></svg>
        <span>Pastor</span>
      </div>

      <svg class="cube" viewBox="0 0 64 74">
        <g stroke="#b4b6b9" fill="#fbfbfb" stroke-linejoin="round">
          <path d="M32 2 63 20 32 42 2 21z" /><path d="m2 21 30 21v29L5 51z" fill="#f6f7f8" /><path d="M63 20 32 42v29l28-22z" fill="#f2f3f5" />
        </g>
        <g class="cube-text">
          <text transform="translate(24 19) rotate(33)">TOP</text>
          <text transform="translate(6 41) rotate(33)">FRONT</text>
          <text transform="translate(38 57) rotate(-35)">RIGHT</text>
        </g>
        <path d="M32.500 36V21" stroke="#4b62a0" /><path d="m33 36 12-8" stroke="#9bd3a8" /><path d="m33 37 14 9" stroke="#b08078" />
        <circle cx="32.500" cy="36.500" r="2.500" fill="#c9d336" />
      </svg>
    </main>

    <section class="prompt">
      <div class="prompt-name"><Icon n="keys" />PromptBar</div>
      <div class="prompt-text">Click the Sketch command to create a sketch that will be used as input for a 'Solids' command or click a 'Solids' command to create a base feature.</div>
      <div class="prompt-tools">
        <button aria-label="Larger text"><span class="letter xl">A</span></button>
        <button aria-label="Smaller text"><span class="letter sm">A</span></button>
        <button aria-label="Expand"><Icon n="up2" /></button>
        <button aria-label="Options"><Icon n="down2" /></button>
        <button aria-label="Pin"><Icon n="pin" /></button>
        <button aria-label="Close prompt"><Icon n="close" /></button>
      </div>
    </section>

    <footer class="status">
      <span class="st-a">Protrusion 1</span>
      <span class="st-b">1 items are selected</span>
      <input v-model="query" type="text" placeholder="Find a command" aria-label="Find a command" />
      <div class="st-icons"><button v-for="n in statusIcons" :key="n" :aria-label="n"><Icon :n="n" /></button></div>
      <button class="knob" aria-label="Zoom out"><svg viewBox="0 0 12 12"><circle cx="6" cy="6" r="5.500" fill="#f4f7fb" /><path d="M3 6h6" stroke="#222" stroke-width="1.500" /></svg></button>
      <input v-model="zoomLevel" class="slider" type="range" aria-label="Zoom" />
      <button class="knob" aria-label="Zoom in"><svg viewBox="0 0 12 12"><circle cx="6" cy="6" r="5.500" fill="#f4f7fb" /><path d="M3 6h6M6 3v6" stroke="#222" stroke-width="1.500" /></svg></button>
      <div class="st-end">
        <button aria-label="YouTube"><Icon n="tube" /></button>
        <button aria-label="Record"><Icon n="rec" /></button>
        <button aria-label="Upload"><Icon n="star" /></button>
      </div>
    </footer>
  </div>
</template>

<style>
html, body { margin: 0; background: #000; }
</style>

<style scoped>
.screen {
  box-sizing: border-box;
  min-height: 100vh;
  padding: 20px 0;
  display: flex;
  flex-direction: column;
  background: #000;
  color: #4f4f4f;
  font: 8px/10px "Noto Sans", "Open Sans", sans-serif;
  overflow: hidden;
}
button { font: inherit; color: inherit; background: none; border: 0; padding: 0; margin: 0; display: flex; align-items: center; justify-content: center; }
.icon { width: 12px; height: 12px; flex: none; display: block; }
.icon-lg { width: 24px; height: 24px; }
.dd { width: 0; height: 0; border: 2px solid transparent; border-top-color: #555; border-bottom: 0; flex: none; }

.titlebar { display: flex; background: #fff; height: 43px; border-bottom: 1px solid #d9d9d9; box-sizing: border-box; }
.app-btn { width: 26px; height: 26px; margin: 5px 28px 0 6px; border: 1px solid #8b96a3; border-radius: 3px; flex: none; box-sizing: border-box; }
.app-btn svg { width: 20px; height: 20px; }
.head { flex: 1; min-width: 0; display: flex; flex-direction: column; }
.head-row { height: 22px; display: flex; align-items: center; position: relative; }
.quick { display: flex; align-items: center; margin-left: -4px; }
.quick-group { display: flex; align-items: center; gap: 5px; padding: 0 5px 0 4px; border-right: 1px solid #e3e3e3; height: 16px; }
.quick-group:nth-child(7) { border-right: 0; }
.quick-group button { gap: 4px; }
.custom { margin: 0 0 4px 9px; }
.custom .icon { width: 9px; height: 9px; }
.title { position: absolute; left: 0; right: 62px; text-align: center; pointer-events: none; font: 9px/12px "Open Sans", "Noto Sans", sans-serif; }
.win { margin-left: auto; display: flex; gap: 13px; padding-right: 7px; }
.win .icon { width: 11px; height: 11px; }
.tabs-row { height: 20px; }
.tabs { display: flex; align-self: stretch; }
.tabs button { padding: 2px 12px 0; line-height: 18px; }
.tabs .active { border: 1px solid #d9d9d9; border-bottom-color: #fff; height: 21px; box-sizing: border-box; padding: 1px 11px 0; color: #2d4f7c; background: #fff; }
.brand { margin-left: auto; color: #0d8a88; font-weight: 700; font-size: 13px; line-height: 16px; }
.mini { display: flex; align-items: center; width: 87px; margin: 0 2px 0 39px; justify-content: space-between; }
.mini .tiny .icon { width: 9px; height: 9px; }
.mini .narrow { width: 6px; }
.dot { width: 3px; height: 2px; background: #444; margin-top: 6px; }

.ribbon { background: #fff; display: flex; padding: 3px 0 5px; height: 70px; box-sizing: border-box; border-bottom: 1px solid #d4d4d4; }
.group { display: flex; flex-direction: column; border-right: 1px solid #dedede; }
.group-body { display: grid; height: 50px; }
.group-name { text-align: center; color: #808080; line-height: 10px; }
.g-clip { grid-template-columns: 32px 31px; padding-left: 9px; }
.g-select { grid-template-columns: 34px 18px; padding: 0 3px 0 6px; }
.g-planes { grid-template-columns: 27px; padding-left: 5px; }
.g-sketch { grid-template-columns: 36px 36px 67px; padding-left: 4px; }
.g-solids { grid-template-columns: 36px 35px 36px 38px 35px 35px 36px 36px 27px; padding-left: 5px; }
.g-pattern { grid-template-columns: 35px 36px; padding: 0 3px 0 5px; }
.g-modify { grid-template-columns: 36px 35px 79px; padding-left: 5px; }
.g-dim { grid-template-columns: 43px 26px 18px 17px 20px; padding: 0 5px 0 6px; }
.g-orient { grid-template-columns: 35px 36px 16px 17px 16px; padding: 0 4px 0 6px; }
.g-style { grid-template-columns: 36px; }
.big { flex-direction: column; justify-content: flex-start; padding-top: 2px; position: relative; white-space: nowrap; }
.cap { display: flex; flex-direction: column; align-items: center; margin-top: 4px; }
.cap > span { display: flex; align-items: center; }
.side { margin-left: 3px; }
.under { position: absolute; bottom: 1px; left: 50%; margin-left: -3px; }
.on { background: #c5daf3; }
.off { color: #a5a5a5; }
.stack { display: grid; grid-template-rows: repeat(3, 1fr); justify-items: start; align-items: center; padding-left: 3px; white-space: nowrap; }
.stack button { gap: 2px; }
.stack .on { padding: 2px; margin-left: -2px; }
.stack.bar { border-left: 1px solid #dedede; padding-left: 5px; }
.letter { position: relative; font: 700 10px/12px "Liberation Serif", serif; color: #1a2c47; width: 12px; text-align: center; }
.letter::after { content: ""; position: absolute; right: 0; top: 1px; border: 1px solid transparent; border-bottom-color: #333; border-top: 0; }
.letter.lg { font-size: 11px; }
.letter.sm { font-size: 8px; }
.letter.xl { font-size: 13px; color: #000; }

.command-row { background: #fff; height: 22px; display: flex; justify-content: center; padding: 1px 0 0; box-sizing: border-box; }
.commands { display: flex; align-items: center; gap: 6px; border: 1px solid #e2e2e2; box-sizing: border-box; height: 20px; padding: 0 4px 0 2px; margin-right: 52px; }
.commands button { gap: 1px; }
.commands button:first-of-type { margin-left: -3px; }
.grip { width: 4px; height: 14px; opacity: 0.6; background: radial-gradient(#bbb 0.5px, transparent 1px) 0 0 / 2px 3px; }

.docs { background: #fff; height: 23px; display: flex; justify-content: space-between; border-bottom: 1px solid #8c8c8c; box-sizing: border-box; padding-left: 1px; }
.doc-tab { display: flex; align-items: center; width: 113px; box-sizing: border-box; border: 1px solid #c4ccd4; border-top: 2px solid #1f4b7d; border-bottom: 0; padding: 0 1px 0 12px; font-size: 9px; color: #666; }
.doc-tab span { flex: 1; margin-left: 4px; }
.doc-tab button .icon { width: 10px; height: 10px; }
.doc-nav { display: flex; align-items: center; padding: 0 1px 4px 0; }

.canvas { flex: 1; position: relative; background: #fbfcfc; overflow: hidden; min-height: 300px; }
.model { position: absolute; inset: 0; width: 100%; height: 100%; }
.axis { font: 9px "Noto Sans", sans-serif; font-weight: 700; }
.panel { position: relative; width: 209px; }
.handle { height: 7px; border: 1px solid #909398; border-top: 0; background: linear-gradient(#e6e7e9, #bfc1c5); box-sizing: border-box; display: flex; align-items: center; justify-content: center; }
.handle span { width: 27px; height: 1px; background: repeating-linear-gradient(90deg, #333 0 1px, transparent 1px 3px); }
.tree { display: grid; grid-template-rows: repeat(12, 1fr); height: 160px; margin-top: 1px; color: #222; white-space: nowrap; }
.node { display: flex; align-items: center; position: relative; }
.root { padding-left: 4px; }
.lv1 { padding-left: 27px; }
.lv2 { padding-left: 46px; }
.node label { display: flex; align-items: center; }
.chip { display: flex; align-items: center; gap: 4px; height: 12px; padding: 0 5px 0 0; border: 1px solid #c9ced4; border-left-color: #e2e6ea; background: #f4f7f9; box-sizing: border-box; }
.root .chip { gap: 3px; }
.root .chip .icon { margin-left: 1px; }
.dim .chip { color: #7c7c7c; }
.chip .icon { width: 11px; height: 11px; }
.chip.hot { background: #13c33c; border-color: #13c33c; color: #fff; font-weight: 700; }
.node input { appearance: none; width: 11px; height: 10px; margin: 0 4px 0 0; border: 1px solid #3c4d63; background: #fff; box-sizing: border-box; display: grid; place-items: center; }
.node input:checked::after { content: ""; width: 4px; height: 1px; border: solid #111; border-width: 0 0 2px 2px; transform: rotate(-45deg); margin-top: -3px; }
.nocheck { width: 15px; }
.expander { position: absolute; left: 13px; top: 3px; width: 8px; height: 8px; border: 1px solid #8b8f96; background: linear-gradient(#333, #333) center / 4px 1px no-repeat #fff; }
.ordered { display: flex; align-items: center; width: 153px; height: 12px; background: linear-gradient(#f3c15c, #e9a424 60%, #f4b844); color: #2b1c00; font-weight: 700; box-sizing: border-box; padding: 0 9px 0 8px; }
.tick { width: 4px; height: 10px; margin-right: 4px; background: linear-gradient(#fff3cf, #fff3cf) center / 1px 10px no-repeat, linear-gradient(#fff3cf, #fff3cf) center / 4px 1px no-repeat; }
.back { margin-left: auto; width: 0; border: 4px solid transparent; border-right: 13px solid #fff3cf; border-left: 0; }

.floatbar { position: absolute; left: 453px; top: 151px; width: 100px; height: 34px; box-sizing: border-box; border: 1px solid #7f98a8; background: #fdfeff; padding: 1px 1px 0; display: flex; flex-direction: column; align-items: center; gap: 5px; }
.floatbar .dots { width: 26px; height: 2px; background: repeating-linear-gradient(90deg, #333 0 1px, transparent 1px 3px); }
.floatbar div { display: flex; gap: 2px; align-self: stretch; flex: 1; }
.floatbar button { flex: 1; border: 1px solid #b4c0d4; background: #eef4fa; }
.floatbar .icon { width: 14px; height: 14px; }

.seminar { position: absolute; right: 3px; top: 5px; width: 112px; height: 48px; }
.sem-text { font: 700 15px Lato, sans-serif; fill: #fff; stroke: #9a9a9a; stroke-width: 2px; paint-order: stroke; }
.cap1 { font-size: 21px; }
.pastor { position: absolute; left: 0; bottom: 0; display: flex; align-items: center; color: #0b4d80; font: 700 27px/40px Lato, sans-serif; }
.pastor svg { width: 28px; height: 28px; }
.cube { position: absolute; right: 21px; bottom: 16px; width: 64px; height: 74px; }
.cube-text { font: 7px "Noto Sans", sans-serif; fill: #4b5563; }

.prompt { display: flex; height: 22px; box-sizing: border-box; background: #fff; border-top: 2px solid #d2d2d2; }
.prompt-name { width: 80px; box-sizing: border-box; display: flex; align-items: center; padding-left: 4px; gap: 3px; font-size: 9px; color: #4c5a70; }
.prompt-name .icon { width: 17px; height: 17px; }
.prompt-text { flex: 1; min-width: 0; border: solid #9b9b9b; border-width: 1px 0 0 1px; padding-left: 1px; color: #111; font-size: 11px; line-height: 17px; white-space: nowrap; overflow: hidden; }
.prompt-tools { display: flex; align-items: center; gap: 1px; padding: 0 1px 0 4px; }

.status { display: flex; align-items: center; height: 16px; background: #2b579a; color: #f2f6fb; font-size: 9px; line-height: 14px; }
.st-a, .st-b { padding-top: 2px; text-align: center; }
.st-a { flex: 562; }
.st-b { flex: 228; margin-right: 15px; }
.status input[type="text"] { width: 116px; height: 14px; border: 0; padding: 0 3px; box-sizing: border-box; font: 9px/14px "Noto Sans", sans-serif; }
.status input::placeholder { color: #b3b3b3; }
.st-icons { display: flex; gap: 7px; margin: 0 5px 0 3px; }
.knob svg { width: 12px; height: 12px; display: block; }
.slider { appearance: none; width: 96px; height: 12px; margin: 0 2px; background: linear-gradient(#a9c4e4, #a9c4e4) center / 100% 1px no-repeat; }
.slider::-webkit-slider-thumb { appearance: none; width: 9px; height: 11px; background: #7fa6d4; border: 1px solid #e3edf8; border-radius: 1px 1px 5px 5px; }
.st-end { display: flex; gap: 9px; margin: 0 3px 0 6px; }
</style>
